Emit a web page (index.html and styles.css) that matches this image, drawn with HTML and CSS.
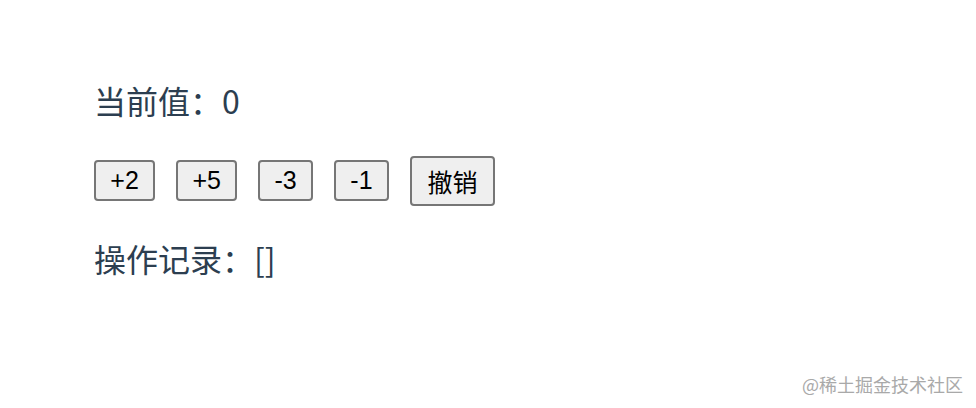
FILE: index.html
```html
<!DOCTYPE html>
<html lang="zh-CN">
<head>
<meta charset="utf-8">
<title>Counter</title>
<link rel="stylesheet" href="styles.css">
</head>
<body>
<div class="app">
  <p class="line">当前值：0</p>
  <div class="actions">
    <button class="btn">+2</button>
    <button class="btn">+5</button>
    <button class="btn">-3</button>
    <button class="btn">-1</button>
    <button class="btn btn-undo">撤销</button>
  </div>
  <p class="line">操作记录：[]</p>
</div>
<div class="watermark">@稀土掘金技术社区</div>
</body>
</html>
```

FILE: styles.css
```css
html, body {
  margin: 0;
  padding: 0;
  background: #ffffff;
}

body {
  width: 976px;
  height: 408px;
  position: relative;
  overflow: hidden;
  font-family: "Noto Sans CJK SC", "Noto Sans", sans-serif;
}

.app {
  display: flex;
  flex-direction: column;
  align-items: flex-start;
  padding: 80px 0 0 94px;
  color: #2c3e50;
}

.line {
  margin: 0;
  height: 40px;
  line-height: 40px;
  font-size: 32px;
  font-family: "Noto Sans CJK SC", sans-serif;
}

.actions {
  display: flex;
  align-items: center;
  gap: 21px;
  height: 49px;
  margin: 36px 0 33px 0;
}

.btn {
  font-family: "Liberation Sans", "Noto Sans CJK SC", sans-serif;
  font-size: 25px;
  color: #000000;
  background: #efefef;
  border: 2px solid #767676;
  border-radius: 4px;
  padding: 4px 14.3px;
  margin: 0;
  line-height: normal;
}

.btn-undo {
  padding: 5px 15.5px;
}

.watermark {
  position: absolute;
  right: 13px;
  bottom: 12px;
  font-size: 18px;
  line-height: 24px;
  color: #a9a9a9;
  font-family: "Noto Sans CJK SC", sans-serif;
}
```
